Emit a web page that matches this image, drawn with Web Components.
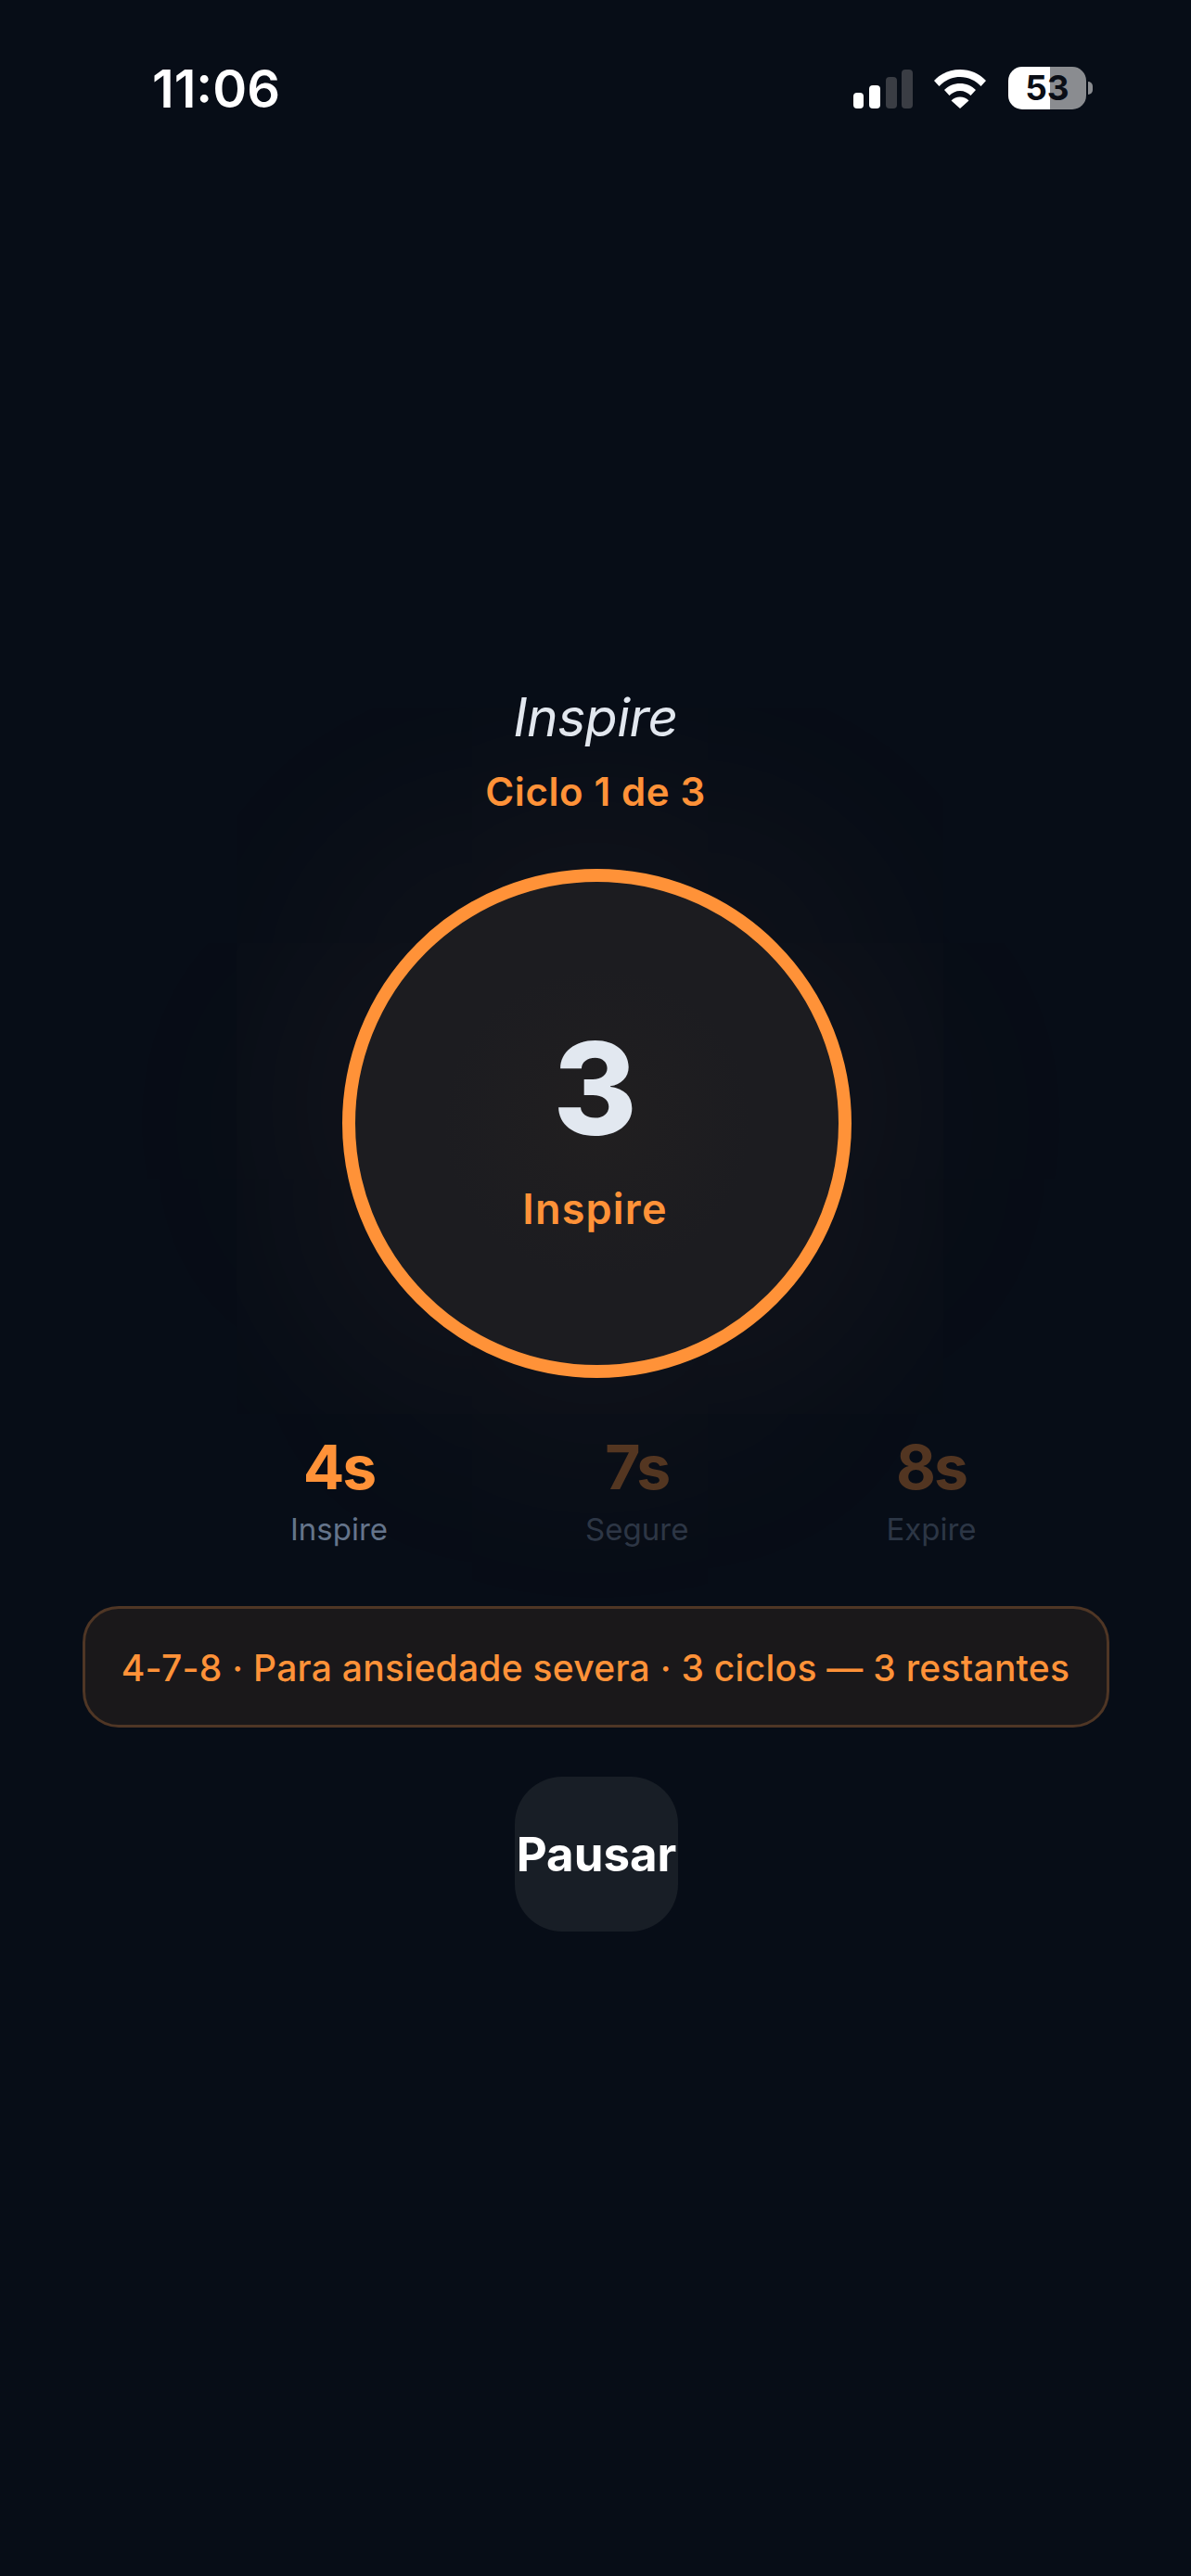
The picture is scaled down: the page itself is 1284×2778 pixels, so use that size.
<!DOCTYPE html>
<html lang="pt">
<head>
<meta charset="utf-8">
<title>Respiração</title>
<style>
  html, body { margin: 0; background: #070d17; }
  body { font-family: Inter, "Liberation Sans", sans-serif; }
</style>
</head>
<body>
<breath-screen>
  <status-bar time="11:06" battery="53"></status-bar>
  <breath-heading cycle="Ciclo 1 de 3">Inspire</breath-heading>
  <breath-orb count="3">Inspire</breath-orb>
  <phase-row>
    <phase-stat value="4s" active>Inspire</phase-stat>
    <phase-stat value="7s">Segure</phase-stat>
    <phase-stat value="8s">Expire</phase-stat>
  </phase-row>
  <info-pill>4-7-8 · Para ansiedade severa · 3 ciclos — 3 restantes</info-pill>
  <pause-button>Pausar</pause-button>
</breath-screen>

<script>
class BreathScreen extends HTMLElement {
    constructor() {
        super();
        this.attachShadow({ mode: 'open' });
        this.shadowRoot.innerHTML = `
        <style>
            :host {
                display: flex;
                flex-direction: column;
                align-items: center;
                width: 1284px;
                height: 2778px;
                background: #070d17;
                font-family: Inter, "Liberation Sans", sans-serif;
                overflow: hidden;
            }
        </style>
        <slot></slot>`
    }
}

class StatusBar extends HTMLElement {
    constructor() {
        super();
        this.attachShadow({ mode: 'open' });
        const time = this.getAttribute('time');
        const battery = this.getAttribute('battery');
        this.shadowRoot.innerHTML = `
        <style>
            :host {
                display: flex;
                align-items: flex-start;
                justify-content: space-between;
                align-self: stretch;
                box-sizing: border-box;
                height: 740px;
                padding: 64px 106px 0 164px;
            }
            .time {
                color: #fff;
                font-size: 56px;
                font-weight: 600;
                line-height: 64px;
            }
            .icons {
                display: flex;
                align-items: flex-start;
                margin-top: 11px;
            }
            svg { display: block; }
            .wifi { margin-left: 23px; }
            .battery {
                position: relative;
                width: 84px;
                height: 46px;
                margin-top: -3px;
                margin-left: 24px;
                border-radius: 15px;
                overflow: hidden;
                background: linear-gradient(90deg, #fff 0 53%, #8a8c90 53% 100%);
                color: #0a0e16;
                font-size: 37px;
                font-weight: 700;
                line-height: 46px;
                text-align: center;
            }
            .nub {
                width: 5px;
                height: 14px;
                margin: 13px 0 0 2px;
                background: #8a8c90;
                border-radius: 0 7px 7px 0;
            }
        </style>
        <div class="time">${time}</div>
        <div class="icons">
            <svg width="64" height="42" viewBox="0 0 64 42">
                <rect x="0" y="25" width="11" height="17" rx="4" fill="#fff"/>
                <rect x="17" y="17" width="12" height="25" rx="4" fill="#fff"/>
                <rect x="35" y="8" width="12" height="34" rx="4" fill="#3a3d44"/>
                <rect x="52" y="0" width="12" height="42" rx="4" fill="#3a3d44"/>
            </svg>
            <svg class="wifi" width="56" height="42" viewBox="0 0 56 42">
                <path d="M28 0C17 0 7.500 4.200 0 12L5.500 18C11.500 11.800 19 8 28 8S44.500 11.800 50.500 18L56 12C48.500 4.200 39 0 28 0Z" fill="#fff"/>
                <path d="M28 15C21.500 15 15.500 17.500 11 22L16.500 28C19.500 25 23.500 23 28 23S36.500 25 39.500 28L45 22C40.500 17.500 34.500 15 28 15Z" fill="#fff"/>
                <path d="M28 29.500C24.500 29.500 21 31 18.500 33.500L28 42L37.500 33.500C35 31 31.500 29.500 28 29.500Z" fill="#fff"/>
            </svg>
            <div class="battery">${battery}</div>
            <div class="nub"></div>
        </div>`
    }
}

class BreathHeading extends HTMLElement {
    constructor() {
        super();
        this.attachShadow({ mode: 'open' });
        this.shadowRoot.innerHTML = `
        <style>
            :host {
                display: flex;
                flex-direction: column;
                align-items: center;
            }
            .title {
                color: #e2e8f0;
                font-size: 57px;
                font-style: italic;
                font-weight: 400;
                line-height: 68px;
                letter-spacing: -0.5px;
            }
            .cycle {
                margin-top: 21px;
                color: #ff9238;
                font-size: 42px;
                font-weight: 600;
                line-height: 50px;
                letter-spacing: 0.6px;
            }
        </style>
        <div class="title"><slot></slot></div>
        <div class="cycle">${this.getAttribute('cycle')}</div>`
    }
}

class BreathOrb extends HTMLElement {
    constructor() {
        super();
        this.attachShadow({ mode: 'open' });
        this.shadowRoot.innerHTML = `
        <style>
            :host {
                display: flex;
                flex-direction: column;
                align-items: center;
                justify-content: center;
                box-sizing: border-box;
                width: 549px;
                height: 549px;
                margin-top: 58px;
                margin-left: 2px;
                padding: 6px 3px 0 0;
                border: 14px solid #ff9238;
                border-radius: 50%;
                background: radial-gradient(circle, #211f20 0%, #1c1c20 45%);
                box-shadow: 0 0 260px 70px rgba(255, 170, 110, 0.06);
            }
            .count {
                color: #e2e8f0;
                font-size: 138px;
                font-weight: 800;
                line-height: 150px;
            }
            .label {
                margin-top: 28px;
                color: #ff9238;
                font-size: 45px;
                font-weight: 600;
                line-height: 54px;
                letter-spacing: 1.2px;
            }
        </style>
        <div class="count">${this.getAttribute('count')}</div>
        <div class="label"><slot></slot></div>`
    }
}

class PhaseRow extends HTMLElement {
    constructor() {
        super();
        this.attachShadow({ mode: 'open' });
        this.shadowRoot.innerHTML = `
        <style>
            :host {
                display: flex;
                gap: 213px;
                align-self: flex-start;
                margin-top: 57px;
                margin-left: 313px;
            }
        </style>
        <slot></slot>`
    }
}

class PhaseStat extends HTMLElement {
    constructor() {
        super();
        this.attachShadow({ mode: 'open' });
        this.shadowRoot.innerHTML = `
        <style>
            :host {
                display: flex;
                flex-direction: column;
                align-items: center;
            }
            .value {
                color: #ff9238;
                font-size: 66px;
                font-weight: 700;
                line-height: 78px;
                letter-spacing: -2px;
                opacity: 0.3;
            }
            .name {
                margin-top: 8px;
                color: #64748b;
                font-size: 33px;
                line-height: 40px;
                opacity: 0.4;
            }
            :host([active]) .value, :host([active]) .name { opacity: 1; }
        </style>
        <div class="value">${this.getAttribute('value')}</div>
        <div class="name"><slot></slot></div>`
    }
}

class InfoPill extends HTMLElement {
    constructor() {
        super();
        this.attachShadow({ mode: 'open' });
        this.shadowRoot.innerHTML = `
        <style>
            :host {
                display: flex;
                align-items: center;
                justify-content: center;
                box-sizing: border-box;
                width: 1107px;
                height: 131px;
                margin-top: 63px;
                padding-top: 2px;
                border: 3px solid #4f3625;
                border-radius: 39px;
                background: #1a181a;
                color: #ff9238;
                font-size: 39px;
                font-weight: 500;
                letter-spacing: 0.27px;
                white-space: nowrap;
            }
        </style>
        <slot></slot>`
    }
}

class PauseButton extends HTMLElement {
    constructor() {
        super();
        this.attachShadow({ mode: 'open' });
        this.shadowRoot.innerHTML = `
        <style>
            :host {
                display: flex;
                align-items: center;
                justify-content: center;
                width: 176px;
                height: 167px;
                margin-top: 53px;
                margin-left: 2px;
                border-radius: 51px;
                background: #181e26;
                color: #fff;
                font-size: 51px;
                font-weight: 700;
                white-space: nowrap;
            }
        </style>
        <slot></slot>`
    }
}

customElements.define('breath-screen', BreathScreen);
customElements.define('status-bar', StatusBar);
customElements.define('breath-heading', BreathHeading);
customElements.define('breath-orb', BreathOrb);
customElements.define('phase-row', PhaseRow);
customElements.define('phase-stat', PhaseStat);
customElements.define('info-pill', InfoPill);
customElements.define('pause-button', PauseButton);
</script>
</body>
</html>
